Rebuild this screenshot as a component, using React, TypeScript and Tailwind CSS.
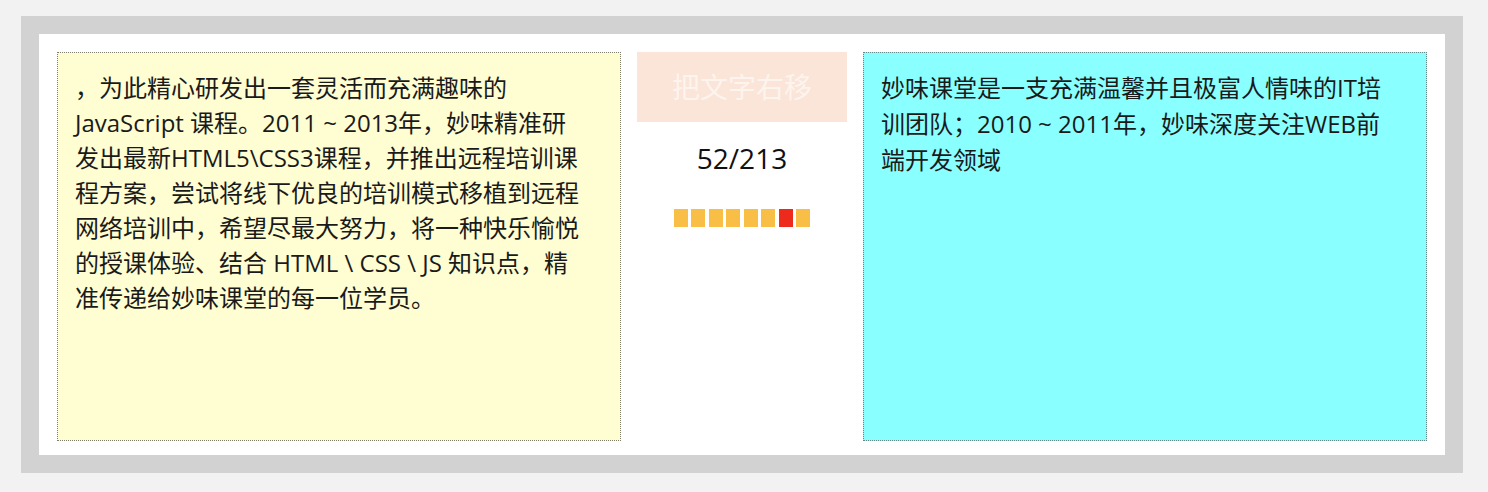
import React from "react";

const leftLines = [
  "，为此精心研发出一套灵活而充满趣味的",
  "JavaScript 课程。2011 ~ 2013年，妙味精准研",
  "发出最新HTML5\\CSS3课程，并推出远程培训课",
  "程方案，尝试将线下优良的培训模式移植到远程",
  "网络培训中，希望尽最大努力，将一种快乐愉悦",
  "的授课体验、结合 HTML \\ CSS \\ JS 知识点，精",
  "准传递给妙味课堂的每一位学员。",
];

const rightLines = [
  "妙味课堂是一支充满温馨并且极富人情味的IT培",
  "训团队；2010 ~ 2011年，妙味深度关注WEB前",
  "端开发领域",
];

const font = "font-['Open_Sans','Noto_Sans_CJK_SC',sans-serif]";

const App = () => {
  const active = 6;

  return (
    <div className={`min-h-[492px] w-[1488px] bg-[#f2f2f2] pl-[21px] pt-[16px] ${font}`}>
      {/* gray frame */}
      <div className="w-[1442px] bg-[#d2d2d2] p-[18px]">
        {/* white stage */}
        <div className="flex h-[421px] gap-[16px] bg-white pl-[18px] pr-[18px] pt-[18px]">
          {/* left text box */}
          <div className="h-[389px] w-[564px] border border-dotted border-[#7d7d6a] bg-[#fffdd2] px-[17px] pt-[17px] text-[24px] leading-[35px] text-[#1a1a1a]">
            {leftLines.map((line, i) => (
              <div key={i} className="whitespace-nowrap">
                {line}
              </div>
            ))}
          </div>

          {/* middle control */}
          <div className="flex w-[210px] flex-col items-center">
            <div className="flex h-[70px] w-full items-center justify-center bg-[#fbe4d8] text-[28px] text-[#fdf4ee]">
              把文字右移
            </div>
            <div className="mt-[18px] text-[28px] leading-[36px] text-[#111]">52/213</div>
            <div className="mt-[33px] flex gap-[3.5px]">
              {Array.from({ length: 8 }).map((_, i) => (
                <span
                  key={i}
                  className={`block h-[18px] w-[14px] ${i === active ? "bg-[#ee2a1c]" : "bg-[#f8be45]"}`}
                />
              ))}
            </div>
          </div>

          {/* right text box */}
          <div className="h-[389px] w-[564px] border border-dotted border-[#5f8a8a] bg-[#8affff] px-[17px] pt-[17px] text-[24px] leading-[36px] text-[#1a1a1a]">
            {rightLines.map((line, i) => (
              <div key={i} className="whitespace-nowrap">
                {line}
              </div>
            ))}
          </div>
        </div>
      </div>
    </div>
  );
};

export default App;
